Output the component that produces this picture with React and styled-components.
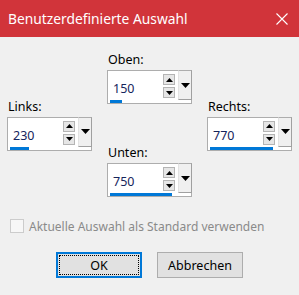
import styled, { createGlobalStyle } from "styled-components";

const Global = createGlobalStyle`
  html, body {
    margin: 0;
    padding: 0;
    background: #f0f0f0;
  }
  body {
    font-family: "Noto Sans", "Liberation Sans", sans-serif;
  }
`;

const Dialog = styled.div`
  width: 299px;
  height: 295px;
  background: #f0f0f0;
  display: flex;
  flex-direction: column;
  overflow: hidden;
`;

const TitleBar = styled.div`
  height: 37px;
  background: #d1343a;
  color: #ffffff;
  display: flex;
  align-items: center;
  justify-content: space-between;
  padding: 0 11px 0 8px;
  font-size: 13.8px;
  box-sizing: border-box;
`;

const Fields = styled.div`
  display: flex;
  align-items: center;
  gap: 15px;
  padding: 15px 0 0 7px;
`;

const Column = styled.div`
  display: flex;
  flex-direction: column;
  gap: 41px;
`;

const Field = styled.div`
  display: flex;
  flex-direction: column;
  width: 85px;
`;

const Label = styled.div`
  font-size: 12.5px;
  line-height: 16px;
  height: 16px;
  color: #000000;
  margin-bottom: 2px;
  padding-left: 1px;
`;

const Box = styled.div`
  height: 34px;
  box-sizing: border-box;
  border: 1px solid #adadad;
  background: #ffffff;
  display: flex;
  flex-direction: column;
`;

const Row = styled.div`
  display: flex;
  height: 29px;
`;

const Value = styled.div`
  flex: 1;
  font-size: 12.5px;
  color: #16255c;
  padding: 10px 0 0 5px;
  line-height: 16px;
`;

const Spin = styled.div`
  display: flex;
  flex-direction: column;
  gap: 2px;
  padding-top: 3px;
  margin-right: 3px;
`;

const SpinBtn = styled.div`
  width: 12px;
  height: 11px;
  box-sizing: border-box;
  border: 1px solid #b4b4b4;
  background: #e6e6e6;
  display: flex;
  align-items: center;
  justify-content: center;
`;

const Drop = styled.div`
  width: 14px;
  height: 30px;
  margin-top: -1px;
  margin-right: -1px;
  box-sizing: border-box;
  background: #f0f0f0;
  border-left: 1px solid #e3e3e3;
  border-right: 1px solid #a0a0a0;
  border-bottom: 1px solid #a0a0a0;
  border-top: 1px solid #adadad;
  display: flex;
  align-items: center;
  justify-content: center;
`;

const Track = styled.div`
  height: 3px;
  margin: 0 0 1px 2px;
`;

const Fill = styled.div`
  height: 3px;
  background: #0078d7;
`;

const CheckRow = styled.label`
  display: flex;
  align-items: center;
  gap: 5px;
  margin: 21px 0 0 10px;
  font-size: 12px;
  color: #8a8a8a;
  height: 16px;
`;

const CheckBox = styled.span`
  width: 14px;
  height: 14px;
  box-sizing: border-box;
  border: 1px solid #cccccc;
  background: #f7f7f7;
`;

const Buttons = styled.div`
  display: flex;
  justify-content: center;
  gap: 15px;
  margin-top: 18px;
`;

const Button = styled.button`
  width: 86px;
  height: 26px;
  box-sizing: border-box;
  font-family: inherit;
  font-size: 12.5px;
  color: #000000;
  background: #e1e1e1;
  border: ${(p) => (p.$default ? "2px solid #0078d7" : "1px solid #adadad")};
  padding: 0;
  display: flex;
  align-items: center;
  justify-content: center;
  position: relative;

  span {
    padding-top: 1px;
  }

  ${(p) =>
    p.$default &&
    `
    &::after {
      content: "";
      position: absolute;
      inset: 1px;
      border: 1px dotted #000000;
    }
  `}
`;

function Tri({ down }) {
  return (
    <svg width="7" height="4" viewBox="0 0 7 4">
      <polygon points={down ? "0,0 7,0 3.5,4" : "0,4 7,4 3.5,0"} fill="#000" />
    </svg>
  );
}

function Spinner({ label, value }) {
  return (
    <Field>
      <Label>{label}</Label>
      <Box>
        <Row>
          <Value>{value}</Value>
          <Spin>
            <SpinBtn>
              <Tri />
            </SpinBtn>
            <SpinBtn>
              <Tri down />
            </SpinBtn>
          </Spin>
          <Drop>
            <svg width="9" height="5" viewBox="0 0 9 5">
              <polygon points="0,0 9,0 4.5,5" fill="#000" />
            </svg>
          </Drop>
        </Row>
        <Track>
          <Fill style={{ width: Math.round((value / 1000) * 82) }} />
        </Track>
      </Box>
    </Field>
  );
}

export default function App() {
  return (
    <Dialog>
      <Global />
      <TitleBar>
        <span>Benutzerdefinierte Auswahl</span>
        <svg width="12" height="12" viewBox="0 0 12 12">
          <path d="M0.5 0.5 L11.5 11.5 M11.5 0.5 L0.5 11.5" stroke="#fff" strokeWidth="1.1" />
        </svg>
      </TitleBar>
      <Fields>
        <Spinner label="Links:" value={230} />
        <Column>
          <Spinner label="Oben:" value={150} />
          <Spinner label="Unten:" value={750} />
        </Column>
        <Spinner label="Rechts:" value={770} />
      </Fields>
      <CheckRow>
        <CheckBox />
        Aktuelle Auswahl als Standard verwenden
      </CheckRow>
      <Buttons>
        <Button $default>
          <span>OK</span>
        </Button>
        <Button>
          <span>Abbrechen</span>
        </Button>
      </Buttons>
    </Dialog>
  );
}
